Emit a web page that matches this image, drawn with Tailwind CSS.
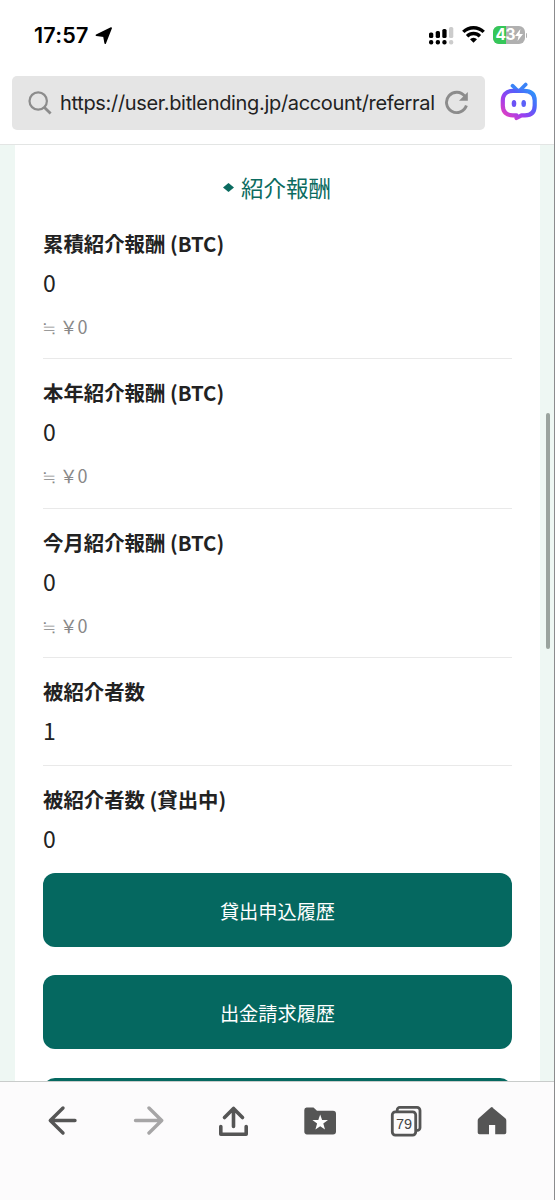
<!DOCTYPE html>
<html lang="ja">
<head>
    <meta charset="UTF-8">
    <meta name="viewport" content="width=device-width, initial-scale=1.0">
    <title>紹介報酬</title>
    <script src="https://cdn.jsdelivr.net/npm/@tailwindcss/browser@4"></script>
</head>
<body class="bg-white">
    <div class="relative flex flex-col w-[555px] h-[1200px] overflow-hidden border-r border-[#8b8b8d] font-['Noto_Sans_CJK_JP',sans-serif] text-[#222]">

        <!-- Status bar -->
        <div class="flex items-center h-[71px] shrink-0 pl-[34px] pr-[27px] font-[Inter,sans-serif]">
            <span class="text-[21.5px] font-semibold text-black leading-none w-[56px] whitespace-nowrap tracking-[0.2px]">17:57</span>
            <svg class="ml-[5px] w-[18px] h-[18px]" viewBox="0 0 18 18"><path d="M16.2 1 10.2 16.2 8.9 9.2 1.4 8.3Z" fill="#000" stroke="#000" stroke-width="1.6" stroke-linejoin="round"/></svg>
            <svg class="ml-auto w-[25px] h-[18px]" viewBox="0 0 25 18">
                <rect x="0" y="5.5" width="4.3" height="5.5" rx="1.6"/>
                <rect x="6.7" y="4" width="4.3" height="7" rx="1.6"/>
                <rect x="13.3" y="2" width="4.3" height="9" rx="1.6"/>
                <rect x="20" y="0" width="4.3" height="11" rx="1.6" fill="#ccc"/>
                <rect x="0" y="13" width="4.3" height="4.5" rx="2"/>
                <rect x="6.7" y="13" width="4.3" height="4.5" rx="2"/>
                <rect x="13.3" y="13" width="4.3" height="4.5" rx="2"/>
                <rect x="20" y="13" width="4.3" height="4.5" rx="2" fill="#ccc"/>
            </svg>
            <svg class="ml-[8px] mb-[2px] w-[23px] h-[17px]" viewBox="0 0 23 17" fill="none" stroke="#000" stroke-width="3.4">
                <path d="M1.3 5.9A14.5 14.5 0 0 1 21.7 5.9"/>
                <path d="M5.1 10.2A9 9 0 0 1 17.9 10.2"/>
                <path d="M11.5 16.8 8 13.3A4.8 4.8 0 0 1 15 13.3Z" fill="#000" stroke="none"/>
            </svg>
            <div class="relative ml-[8px] w-[32px] h-[18px] mb-[1px] rounded-[6px] overflow-hidden bg-[#b0b0b0] text-white">
                <div class="absolute inset-y-0 left-0 w-[43%] bg-[#35c759]"></div>
                <span class="absolute left-[3px] top-0 text-[15.5px] leading-[18px] font-bold tracking-[-0.6px]">43</span>
                <svg class="absolute left-[22px] top-[3px] w-[8px] h-[12px]" viewBox="0 0 8 12"><path d="M5.4 0 0 7H3.5L2.6 12 8 5H4.5Z" fill="#fff"/></svg>
            </div>
            <div class="ml-[1px] mb-[1px] w-[1.5px] h-[5px] rounded-r bg-[#b0b0b0]"></div>
        </div>

        <!-- Address bar -->
        <div class="flex items-center h-[74px] shrink-0 pl-[11.5px] pb-[12px] pt-[2px] border-b border-[#e3e5e4]">
            <div class="flex items-center w-[473px] h-[54px] rounded-[5px] bg-[#e5e5e5] pl-[16.5px]">
                <svg class="w-[24px] h-[24px] shrink-0" viewBox="0 0 24 24" fill="none" stroke="#8c8c8c" stroke-width="2.2"><circle cx="10.2" cy="10" r="8.7"/><path d="M16.2 16.2 22.6 22.6" stroke-width="2.8"/></svg>
                <span class="ml-[8px] w-[376px] whitespace-nowrap font-[Inter,sans-serif] text-[20px] leading-none tracking-[-0.33px] text-[#222]">https://user.bitlending.jp/account/referral</span>
                <svg class="ml-[8px] w-[25px] h-[25px] shrink-0" viewBox="0 0 25 25"><path d="M20.8 6.2A10.2 10.2 0 1 0 22.4 15.5" fill="none" stroke="#8c8c8c" stroke-width="2.9"/><path d="M23.8 2V10.8H15Z" fill="#8c8c8c"/></svg>
            </div>
            <svg class="ml-[15.5px] mb-[2px] w-[38px] h-[39px]" viewBox="0 0 38 39" fill="none">
                <defs>
                    <linearGradient id="bot" x1="4" y1="34" x2="30" y2="6" gradientUnits="userSpaceOnUse">
                        <stop offset="0" stop-color="#e23fc0"/><stop offset=".35" stop-color="#9a3ff0"/><stop offset=".68" stop-color="#5360fa"/><stop offset="1" stop-color="#2e95fa"/>
                    </linearGradient>
                </defs>
                <path d="M12.5 3.7 17.5 8.5M25.7 2.5 19.5 8.8" stroke="#3a83f7" stroke-width="3.7" stroke-linecap="round"/>
                <path d="M13 8.8H24C32 8.8 34.7 13 34.7 18.5V23.5C34.7 30 31.5 33.4 25 33.4H21.5L16.5 36V33.4H13C6.5 33.4 2.8 30 2.8 23.5V18.5C2.8 13 6 8.8 13 8.8Z" stroke="url(#bot)" stroke-width="4.2" stroke-linejoin="round"/>
                <ellipse cx="14" cy="21.5" rx="2.3" ry="3.6" fill="#6b52f5"/><ellipse cx="23.7" cy="21.5" rx="2.3" ry="3.6" fill="#5b60f8"/>
            </svg>
        </div>

        <!-- Page -->
        <div class="relative h-[936px] shrink-0 overflow-hidden bg-[#eef7f3] pl-[15px] pr-[14px]">
            <div class="h-full bg-white pl-[28px] pr-[28px]">
                <h1 class="flex items-center justify-center h-[65px] pt-[19px] pr-px text-[22.5px] leading-none text-[#0b6b60] gap-[7px]">
                    <svg class="w-[11px] h-[9px]" viewBox="0 0 11 9"><path d="M5.5 0 11 4.5 5.5 9 0 4.5Z" fill="#0b6b60"/></svg>
                    紹介報酬
                </h1>
                <div class="h-[149.3px] pt-[17px] border-b-[1.5px] border-[#e9e9e9]">
                    <p class="text-[20.4px] leading-[32px] font-bold">累積紹介報酬 (BTC)</p>
                    <p class="text-[23px] leading-[46px]">0</p>
                    <p class="-ml-px text-[18px] leading-[42px] tracking-[-0.2px] text-[#888]">≒ ￥0</p>
                </div>
                <div class="h-[149.3px] pt-[17px] border-b-[1.5px] border-[#e9e9e9]">
                    <p class="text-[20.4px] leading-[32px] font-bold">本年紹介報酬 (BTC)</p>
                    <p class="text-[23px] leading-[46px]">0</p>
                    <p class="-ml-px text-[18px] leading-[42px] tracking-[-0.2px] text-[#888]">≒ ￥0</p>
                </div>
                <div class="h-[149.3px] pt-[17px] border-b-[1.5px] border-[#e9e9e9]">
                    <p class="text-[20.4px] leading-[32px] font-bold">今月紹介報酬 (BTC)</p>
                    <p class="text-[23px] leading-[46px]">0</p>
                    <p class="-ml-px text-[18px] leading-[42px] tracking-[-0.2px] text-[#888]">≒ ￥0</p>
                </div>
                <div class="h-[108.1px] pt-[17px] border-b-[1.5px] border-[#e9e9e9]">
                    <p class="text-[20.4px] leading-[32px] font-bold">被紹介者数</p>
                    <p class="text-[23px] leading-[46px]">1</p>
                </div>
                <div class="h-[107px] pt-[17px]">
                    <p class="text-[20.4px] leading-[32px] font-bold">被紹介者数 (貸出中)</p>
                    <p class="text-[23px] leading-[46px]">0</p>
                </div>
                <div class="flex flex-col gap-[28.5px]">
                    <button class="h-[74px] pt-[2px] rounded-[12px] bg-[#056860] text-[19.2px] text-white">貸出申込履歴</button>
                    <button class="h-[74px] pt-[2px] rounded-[12px] bg-[#056860] text-[19.2px] text-white">出金請求履歴</button>
                    <button class="h-[74px] rounded-[12px] bg-[#056860]"></button>
                </div>
            </div>
            <div class="absolute right-[4px] top-[268px] w-[4px] h-[236px] rounded-full bg-[#9aa39e]"></div>
        </div>

        <!-- Browser toolbar -->
        <div class="flex justify-between h-[119px] shrink-0 border-t border-[#c9cccb] bg-[#fcfbfc] px-[46px] pt-[23px]">
            <svg class="w-[32px] h-[32px]" viewBox="0 0 32 32" fill="none" stroke="#555" stroke-width="3.4" stroke-linecap="round" stroke-linejoin="round"><path d="M29 15.5H4.5M17 3 4.3 15.5 17 28"/></svg>
            <svg class="w-[32px] h-[32px]" viewBox="0 0 32 32" fill="none" stroke="#a6a5a6" stroke-width="3.4" stroke-linecap="round" stroke-linejoin="round"><path d="M3.5 15.5H28M17 3 29.7 15.5 17 28"/></svg>
            <svg class="w-[32px] h-[32px]" viewBox="0 0 32 32" fill="none" stroke="#555" stroke-width="3.6" stroke-linecap="round" stroke-linejoin="round"><path d="M15.5 21.5V4M6.5 12.5 15.5 3.4 24.5 12.5"/><path d="M2.8 21.5V29.2H28.2V21.5"/></svg>
            <svg class="w-[32px] h-[32px]" viewBox="0 0 32 32"><path d="M2.5 2.5H9.5L13 5.7H29A3 3 0 0 1 32 8.7V26.5A3 3 0 0 1 29 29.5H3A3 3 0 0 1 .3 26.5V5A2.6 2.6 0 0 1 2.5 2.5Z" fill="#555"/><path d="M16.2 9.6 18.1 15H24L19.3 18.6 21 24.6 16.2 21.2 11.4 24.6 13.1 18.6 8.4 15H14.3Z" fill="#fff"/></svg>
            <svg class="w-[32px] h-[32px]" viewBox="0 0 32 32" fill="none" stroke="#555" stroke-width="2.8">
                <path d="M7.2 6V5A2.6 2.6 0 0 1 9.8 2.4H27A3 3 0 0 1 30 5.4V22.7A2.6 2.6 0 0 1 27.4 25.3H26"/>
                <rect x="2.3" y="6.8" width="23.4" height="23.3" rx="3"/>
                <text x="14" y="23.6" text-anchor="middle" font-family="Liberation Sans, sans-serif" font-size="14.5" fill="#444" stroke="none">79</text>
            </svg>
            <svg class="w-[32px] h-[32px]" viewBox="0 0 32 32"><path d="M16 2.2 29.3 13.3Q30.3 14.2 30.3 15.5V27.5A1.8 1.8 0 0 1 28.5 29.3H19.2V20H13V29.3H3.5A1.8 1.8 0 0 1 1.7 27.5V15.5Q1.7 14.2 2.7 13.3L14.5 2.7Q16 1.4 17.5 2.7Z" fill="#555"/></svg>
        </div>
    </div>
</body>
</html>
